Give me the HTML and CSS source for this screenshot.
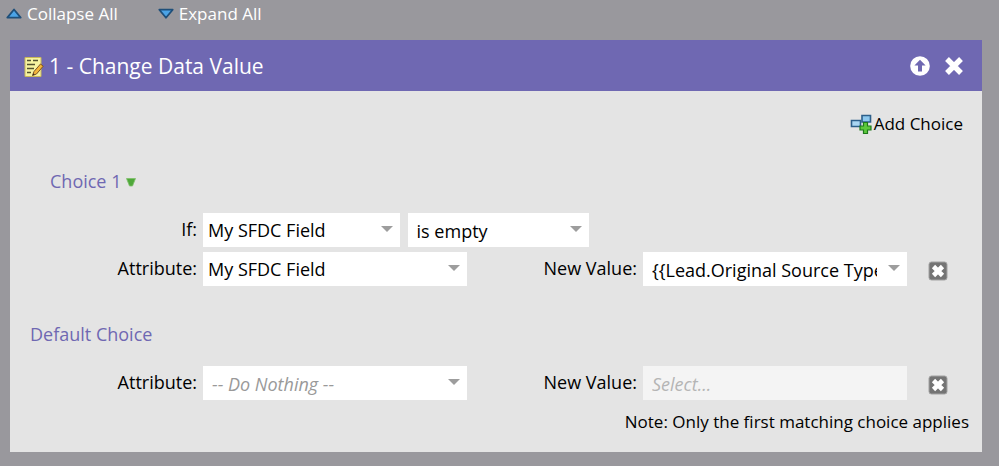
FILE: index.html
```html
<!DOCTYPE html>
<html lang="en">
<head>
  <meta charset="UTF-8">
  <meta name="viewport" content="width=device-width, initial-scale=1.0">
  <title>Change Data Value</title>
  <link rel="stylesheet" href="styles.css">
</head>
<body>

  <div class="toolbar">
    <button type="button" class="tool">
      <svg width="16" height="12" viewBox="0 0 16 12"><path d="M8 1.5L14.7 9.6H1.3Z" fill="#4ba3e6" stroke="#1f4f7a" stroke-width="1.8" stroke-linejoin="round"/></svg>
      Collapse All
    </button>
    <button type="button" class="tool">
      <svg width="16" height="12" viewBox="0 0 16 12"><path d="M8 9.8L1.3 1.7H14.7Z" fill="#4ba3e6" stroke="#1f4f7a" stroke-width="1.8" stroke-linejoin="round"/></svg>
      Expand All
    </button>
  </div>

  <div class="panel">
    <div class="panel-header">
      <svg width="20" height="22" viewBox="0 0 20 22">
        <path d="M1 2.5H17V21.5H1Z" fill="#f6f3a0" stroke="#c9b85a"/>
        <path d="M3 5.5H7M9 5.5H14M3 9.5H11M3 13.5H10M3 17.5H7" stroke="#54532f" stroke-width="1.6"/>
        <path d="M8.5 20.5L10 16.5L16.5 9L19.2 11.2L12.5 19Z" fill="#f3b73c" stroke="#7d5220"/>
        <path d="M8.5 20.5L9.4 18.2L10.8 19.6Z" fill="#33291c"/>
      </svg>
      <h1>1 - Change Data Value</h1>
      <button type="button" class="icon-btn" aria-label="Move up">
        <svg width="20" height="20" viewBox="0 0 20 20">
          <circle cx="10" cy="10" r="9.8" fill="#fff"/>
          <path d="M10 3.8L15.6 9.6H12V15.6H8V9.6H4.4Z" fill="#6f68b2"/>
        </svg>
      </button>
      <button type="button" class="icon-btn" aria-label="Remove step">
        <svg width="20" height="20" viewBox="0 0 20 20"><path d="M3 3L17 17M17 3L3 17" stroke="#fff" stroke-width="5.4"/></svg>
      </button>
    </div>

    <div class="panel-body">
      <button type="button" class="add-choice">
        <svg width="22" height="20" viewBox="0 0 22 20">
          <path d="M1.5 6.5H10.5V12.5H1.5Z" fill="#a9d6f2" stroke="#2d5f8a" stroke-width="1.6"/>
          <path d="M12 1.5H20.5V8H12Z" fill="#8cc8ee" stroke="#2d5f8a" stroke-width="1.6"/>
          <path d="M13.5 8.5H17.5V12H21V16H17.5V19.5H13.5V16H10V12H13.5Z" fill="#5cc93c" stroke="#1f7a1c" stroke-width="1.2"/>
        </svg>
        Add Choice
      </button>

      <h2 class="choice-title">
        Choice 1
        <svg width="10" height="10" viewBox="0 0 10 10"><path d="M0.5 0.5H9.5L6.5 8H3.5Z" fill="#4fa83a" stroke="#7fc06a" stroke-width="0.8"/></svg>
      </h2>

      <div class="row">
        <label for="if-field">If:</label>
        <div class="condition">
          <span class="field field-wide"><select id="if-field"><option>My SFDC Field</option></select></span>
          <span class="field combo"><select aria-label="Operator"><option>is empty</option></select></span>
        </div>
      </div>

      <div class="row">
        <label for="attr-1">Attribute:</label>
        <span class="field"><select id="attr-1"><option>My SFDC Field</option></select></span>
        <label for="value-1">New Value:</label>
        <span class="field combo"><select id="value-1"><option>{{Lead.Original Source Type}}</option></select></span>
        <button type="button" class="icon-btn remove" aria-label="Remove choice">
          <svg width="20" height="20" viewBox="0 0 20 20">
            <rect x="1" y="1" width="18" height="18" rx="2.5" fill="#747474" stroke="#a2a2a2"/>
            <path d="M5.5 5.5L14.5 14.5M14.5 5.5L5.5 14.5" stroke="#fff" stroke-width="4.6"/>
          </svg>
        </button>
      </div>

      <h2 class="default-title">Default Choice</h2>

      <div class="row">
        <label for="attr-2">Attribute:</label>
        <span class="field combo"><select id="attr-2" class="empty"><option>-- Do Nothing --</option></select></span>
        <label for="value-2">New Value:</label>
        <input type="text" id="value-2" placeholder="Select..." disabled>
        <button type="button" class="icon-btn remove" aria-label="Remove default choice">
          <svg width="20" height="20" viewBox="0 0 20 20">
            <rect x="1" y="1" width="18" height="18" rx="2.5" fill="#747474" stroke="#a2a2a2"/>
            <path d="M5.5 5.5L14.5 14.5M14.5 5.5L5.5 14.5" stroke="#fff" stroke-width="4.6"/>
          </svg>
        </button>
      </div>

      <p class="note">Note: Only the first matching choice applies</p>
    </div>
  </div>

</body>
</html>
```

FILE: styles.css
```css
* {
  box-sizing: border-box;
}

body {
  margin: 0;
  background-color: #99989d;
  font-family: "Open Sans", sans-serif;
  font-size: 17px;
  line-height: 24px;
  color: #000;
}

button, select, input {
  font: inherit;
  color: inherit;
}

button {
  display: flex;
  align-items: center;
  padding: 0;
  border: none;
  background: none;
  cursor: pointer;
}

/* Collapse / expand links above the panel */
.toolbar {
  display: flex;
  gap: 40px;
  padding: 2px 6px 14px;
}

.tool {
  gap: 5px;
  color: #fff;
}

.panel {
  margin: 0 17px 14px 10px;
  background-color: #e4e4e4;
}

.panel-header {
  display: flex;
  align-items: center;
  height: 51px;
  padding: 0 18px 0 14px;
  background-color: #6f68b2;
  color: #fff;
}

.panel-header h1 {
  flex: 1;
  margin: 0 0 0 5px;
  font-size: 21px;
  font-weight: normal;
}

.panel-header .icon-btn {
  margin-left: 14px;
}

.panel-body {
  padding: 21px 13px 18px 0;
}

.add-choice {
  gap: 2px;
  margin: 0 6px 0 auto;
}

h2 {
  margin: 0;
  font-size: 18px;
  font-weight: normal;
  color: #6f68b2;
}

.choice-title {
  padding: 33px 0 20px 40px;
}

.default-title {
  padding: 31px 0 20px 20px;
}

.row {
  display: grid;
  grid-template-columns: 187px 1fr 164px 1fr 35px;
  column-gap: 6px;
  padding-right: 21px;
  margin-bottom: 5px;
  font-size: 18px;
}

.row label {
  padding-top: 4px;
  text-align: right;
}

.condition {
  grid-column: 2 / 4;
  display: flex;
  gap: 8px;
  padding-right: 48px;
}

.field {
  position: relative;
  display: block;
  flex: 12;
  min-width: 0;
}

.field-wide {
  flex: 13;
}

/* Drop-down arrow */
.field::after {
  content: "";
  position: absolute;
  top: 13px;
  right: 7px;
  border: 6px solid transparent;
  border-top-color: #9d9d9d;
  border-bottom: none;
  pointer-events: none;
}

select, input {
  display: block;
  width: 100%;
  height: 34px;
  padding: 0 30px 0 5px;
  border: none;
  border-radius: 0;
  background-color: #fff;
  appearance: none;
}

.combo select, input {
  padding-top: 2px;
  padding-left: 9px;
}

.empty {
  font-style: italic;
  color: #999;
}

input:disabled {
  background-color: #f4f4f4;
}

input::placeholder {
  font-style: italic;
  color: #b5b5b5;
}

.remove {
  justify-self: end;
  padding-top: 4px;
}

.note {
  margin: 10px 0 0;
  text-align: right;
}
```
